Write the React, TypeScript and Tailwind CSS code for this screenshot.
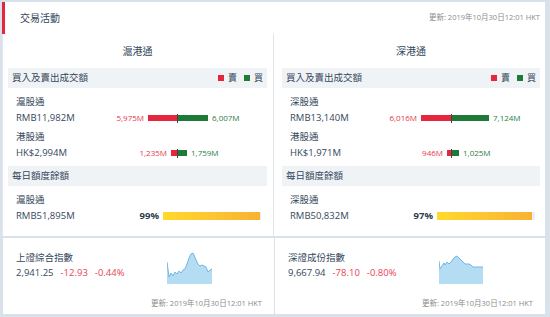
import React from "react";

const FONT = { fontFamily: '"Open Sans", "Noto Sans CJK TC", sans-serif' };

function SplitRow({ label, value, sell, buy, sellW, buyW }: { label: string; value: string; sell: string; buy: string; sellW: number; buyW: number }) {
  return (
    <div>
      <div className="h-[14px] leading-[14px] pl-[8px] text-[9.5px] text-[#34475b]">{label}</div>
      <div className="mt-[2px] h-[14px] flex items-center">
        <div className="w-[169px] flex items-center justify-between pl-[8px]">
          <span className="text-[9.5px] leading-[14px] text-[#34475b]">{value}</span>
          <div className="flex items-center">
            <span className="text-[8px] text-[#e8344a] mr-[4px]">{sell}</span>
            <div className="h-[6px] bg-[#e6263d]" style={{ width: sellW }} />
          </div>
        </div>
        <div className="w-[1px] h-[9px] bg-[#444]" />
        <div className="flex items-center">
          <div className="h-[6px] bg-[#1f7a37]" style={{ width: buyW }} />
          <span className="text-[8px] text-[#2e7d45] ml-[4px]">{buy}</span>
        </div>
      </div>
    </div>
  );
}

function QuotaRow({ label, value, pct }: { label: string; value: string; pct: number }) {
  return (
    <div className="mt-[7px]">
      <div className="h-[14px] leading-[14px] pl-[8px] text-[9.5px] text-[#34475b]">{label}</div>
      <div className="mt-[2px] h-[14px] flex items-center">
        <div className="w-[151px] flex items-center justify-between pl-[8px]">
          <span className="text-[9.5px] text-[#34475b]">{value}</span>
          <span className="text-[9.5px] font-bold text-[#2d3e50]">{pct}%</span>
        </div>
        <div className="ml-[4px] w-[98px] h-[8px] bg-[#eeeeee]">
          <div className="h-full bg-gradient-to-r from-[#ffd92b] to-[#f8b234]" style={{ width: `${pct}%` }} />
        </div>
      </div>
    </div>
  );
}

function SectionBar({ title, legend }: { title: string; legend?: boolean }) {
  return (
    <div className="h-[20px] bg-[#f0f3f6] flex items-center justify-between pl-[4px] pr-[4px]">
      <span className="text-[9.5px] text-[#34475b]">{title}</span>
      {legend && (
        <div className="flex items-center text-[9px] text-[#34475b]">
          <span className="w-[6px] h-[6px] bg-[#e6263d] mr-[4px]" />
          <span>賣</span>
          <span className="w-[6px] h-[6px] bg-[#1f7a37] ml-[7px] mr-[4px]" />
          <span>買</span>
        </div>
      )}
    </div>
  );
}

function Column({ title, a, b, q, className }: { title: string; a: any; b: any; q: any; className: string }) {
  return (
    <div className={className}>
      <div className="h-[34px] flex items-center justify-center text-[10px] text-[#34475b]">{title}</div>
      <SectionBar title="買入及賣出成交額" legend />
      <div className="mt-[7px]"><SplitRow {...a} /></div>
      <div className="mt-[5px]"><SplitRow {...b} /></div>
      <div className="mt-[6px]"><SectionBar title="每日額度餘額" /></div>
      <QuotaRow {...q} />
    </div>
  );
}

function Spark({ pts }: { pts: [number, number][] }) {
  const line = pts.map((p, i) => `${i ? "L" : "M"}${p[0]},${p[1]}`).join(" ");
  const last = pts[pts.length - 1][0];
  const area = `${line} L${last},32 L0,32 Z`;
  return (
    <svg width="46" height="32" viewBox="0 0 46 32">
      <path d={area} fill="#b4dcf2" />
      <path d={line} fill="none" stroke="#72b6e2" strokeWidth="1" />
    </svg>
  );
}

function IndexCard({ name, val, chg, pct, pts }: { name: string; val: string; chg: string; pct: string; pts: [number, number][] }) {
  return (
    <div className="bg-white flex flex-col pt-[13px] pl-[13px] pr-[12px] pb-[5px]">
      <div className="flex">
        <div className="w-[151px]">
          <div className="h-[14px] leading-[14px] text-[9.5px] text-[#34475b]">{name}</div>
          <div className="mt-[1px] h-[14px] flex items-center gap-[7px] text-[9.5px]">
            <span className="text-[#34475b]">{val}</span>
            <span className="text-[#ea4256]">{chg}</span>
            <span className="text-[#ea4256]">{pct}</span>
          </div>
        </div>
        <div className="mt-[1px]"><Spark pts={pts} /></div>
      </div>
      <div className="mt-auto text-right text-[7.5px] leading-[12px] text-[#8a8a8a]">更新: 2019年10月30日12:01 HKT</div>
    </div>
  );
}

const shPts: [number, number][] = [[0,10],[2,25],[4,21],[6,24],[8,20],[10,22],[12,19],[14,21],[16,18],[18,17],[20,12],[22,6],[24,2],[26,1],[27,3],[29,8],[31,12],[33,14],[35,13],[37,14],[39,15],[41,20],[43,18],[45,17]];
const szPts: [number, number][] = [[0,9],[1,17],[3,14],[5,11],[6,13],[8,10],[10,12],[12,10],[14,7],[16,5],[18,4],[20,6],[22,8],[24,10],[26,12],[28,12],[30,12],[32,13],[34,15],[36,15],[38,15],[41,15],[44,15]];

export default function App() {
  return (
    <div style={FONT} className="w-[550px] h-[317px] bg-[#d9e2eb] pt-[2px] pl-[2px] pr-[5px] pb-[3px] flex flex-col gap-[2px] overflow-hidden">
      <div className="bg-white flex flex-col h-[234px]">
        <div className="h-[32px] flex items-center justify-between border-l-[3px] border-[#e5253f] pl-[15px] pr-[5px]">
          <span className="text-[10px] text-[#34475b]">交易活動</span>
          <span className="text-[7.5px] text-[#8a8a8a]">更新: 2019年10月30日12:01 HKT</span>
        </div>
        <div className="flex-1 grid grid-cols-[271px_1fr] border-l border-[#e1e6ec]">
          <Column
            className="pl-[5px] pr-[6px] border-r border-[#e1e6ec]"
            title="滬港通"
            a={{ label: "滬股通", value: "RMB11,982M", sell: "5,975M", buy: "6,007M", sellW: 29, buyW: 30 }}
            b={{ label: "港股通", value: "HK$2,994M", sell: "1,235M", buy: "1,759M", sellW: 6, buyW: 9 }}
            q={{ label: "滬股通", value: "RMB51,895M", pct: 99 }}
          />
          <Column
            className="pl-[8px] pr-[5px]"
            title="深港通"
            a={{ label: "深股通", value: "RMB13,140M", sell: "6,016M", buy: "7,124M", sellW: 30, buyW: 37 }}
            b={{ label: "港股通", value: "HK$1,971M", sell: "946M", buy: "1,025M", sellW: 4, buyW: 7 }}
            q={{ label: "深股通", value: "RMB50,832M", pct: 97 }}
          />
        </div>
      </div>
      <div className="flex-1 grid grid-cols-[271px_1fr] gap-[1px] pl-[1px]">
        <IndexCard name="上證綜合指數" val="2,941.25" chg="-12.93" pct="-0.44%" pts={shPts} />
        <IndexCard name="深證成份指數" val="9,667.94" chg="-78.10" pct="-0.80%" pts={szPts} />
      </div>
    </div>
  );
}
